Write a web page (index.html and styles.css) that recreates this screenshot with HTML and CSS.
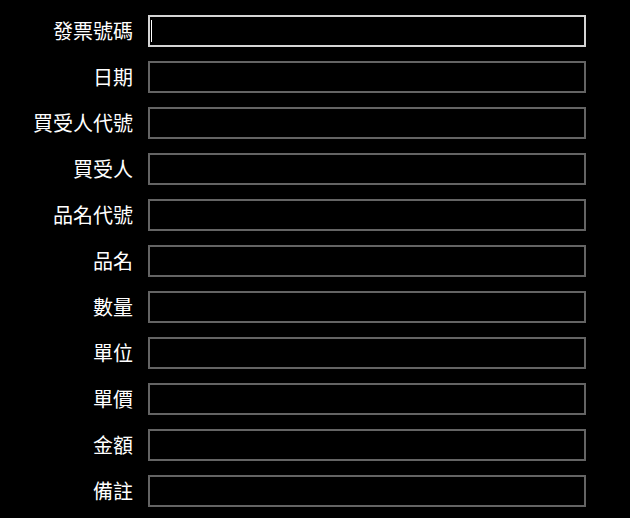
FILE: index.html
```
<!DOCTYPE html>
<html lang="zh-Hant">
<head>
<meta charset="utf-8">
<title>發票</title>
<link rel="stylesheet" href="styles.css">
</head>
<body>
<form class="form">
  <label class="label" for="f1">發票號碼</label>
  <div class="field"><input class="input input-focus" id="f1" type="text"><span class="caret"></span></div>
  <label class="label" for="f2">日期</label>
  <div class="field"><input class="input" id="f2" type="text"></div>
  <label class="label" for="f3">買受人代號</label>
  <div class="field"><input class="input" id="f3" type="text"></div>
  <label class="label" for="f4">買受人</label>
  <div class="field"><input class="input" id="f4" type="text"></div>
  <label class="label" for="f5">品名代號</label>
  <div class="field"><input class="input" id="f5" type="text"></div>
  <label class="label" for="f6">品名</label>
  <div class="field"><input class="input" id="f6" type="text"></div>
  <label class="label" for="f7">數量</label>
  <div class="field"><input class="input" id="f7" type="text"></div>
  <label class="label" for="f8">單位</label>
  <div class="field"><input class="input" id="f8" type="text"></div>
  <label class="label" for="f9">單價</label>
  <div class="field"><input class="input" id="f9" type="text"></div>
  <label class="label" for="f10">金額</label>
  <div class="field"><input class="input" id="f10" type="text"></div>
  <label class="label" for="f11">備註</label>
  <div class="field"><input class="input" id="f11" type="text"></div>
</form>
</body>
</html>
```
FILE: styles.css
```
html, body {
  margin: 0;
  padding: 0;
  background: #000;
}
body {
  font-family: "Noto Sans CJK TC", "Noto Sans CJK SC", sans-serif;
  color: #fff;
}
.form {
  display: grid;
  grid-template-columns: 133px 438px;
  column-gap: 15px;
  row-gap: 14px;
  padding-top: 15px;
  align-items: center;
}
.label {
  text-align: right;
  font-size: 20px;
  line-height: 24px;
  color: #fff;
}
.field {
  position: relative;
  height: 32px;
}
.input {
  box-sizing: border-box;
  width: 438px;
  height: 32px;
  margin: 0;
  padding: 0 4px;
  background: #000;
  border: 2px solid #646464;
  color: #fff;
  font: inherit;
  outline: none;
}
.input-focus {
  border-color: #d4d4d4;
}
.caret {
  position: absolute;
  left: 3px;
  top: 5px;
  width: 1px;
  height: 22px;
  background: #fff;
}
```
